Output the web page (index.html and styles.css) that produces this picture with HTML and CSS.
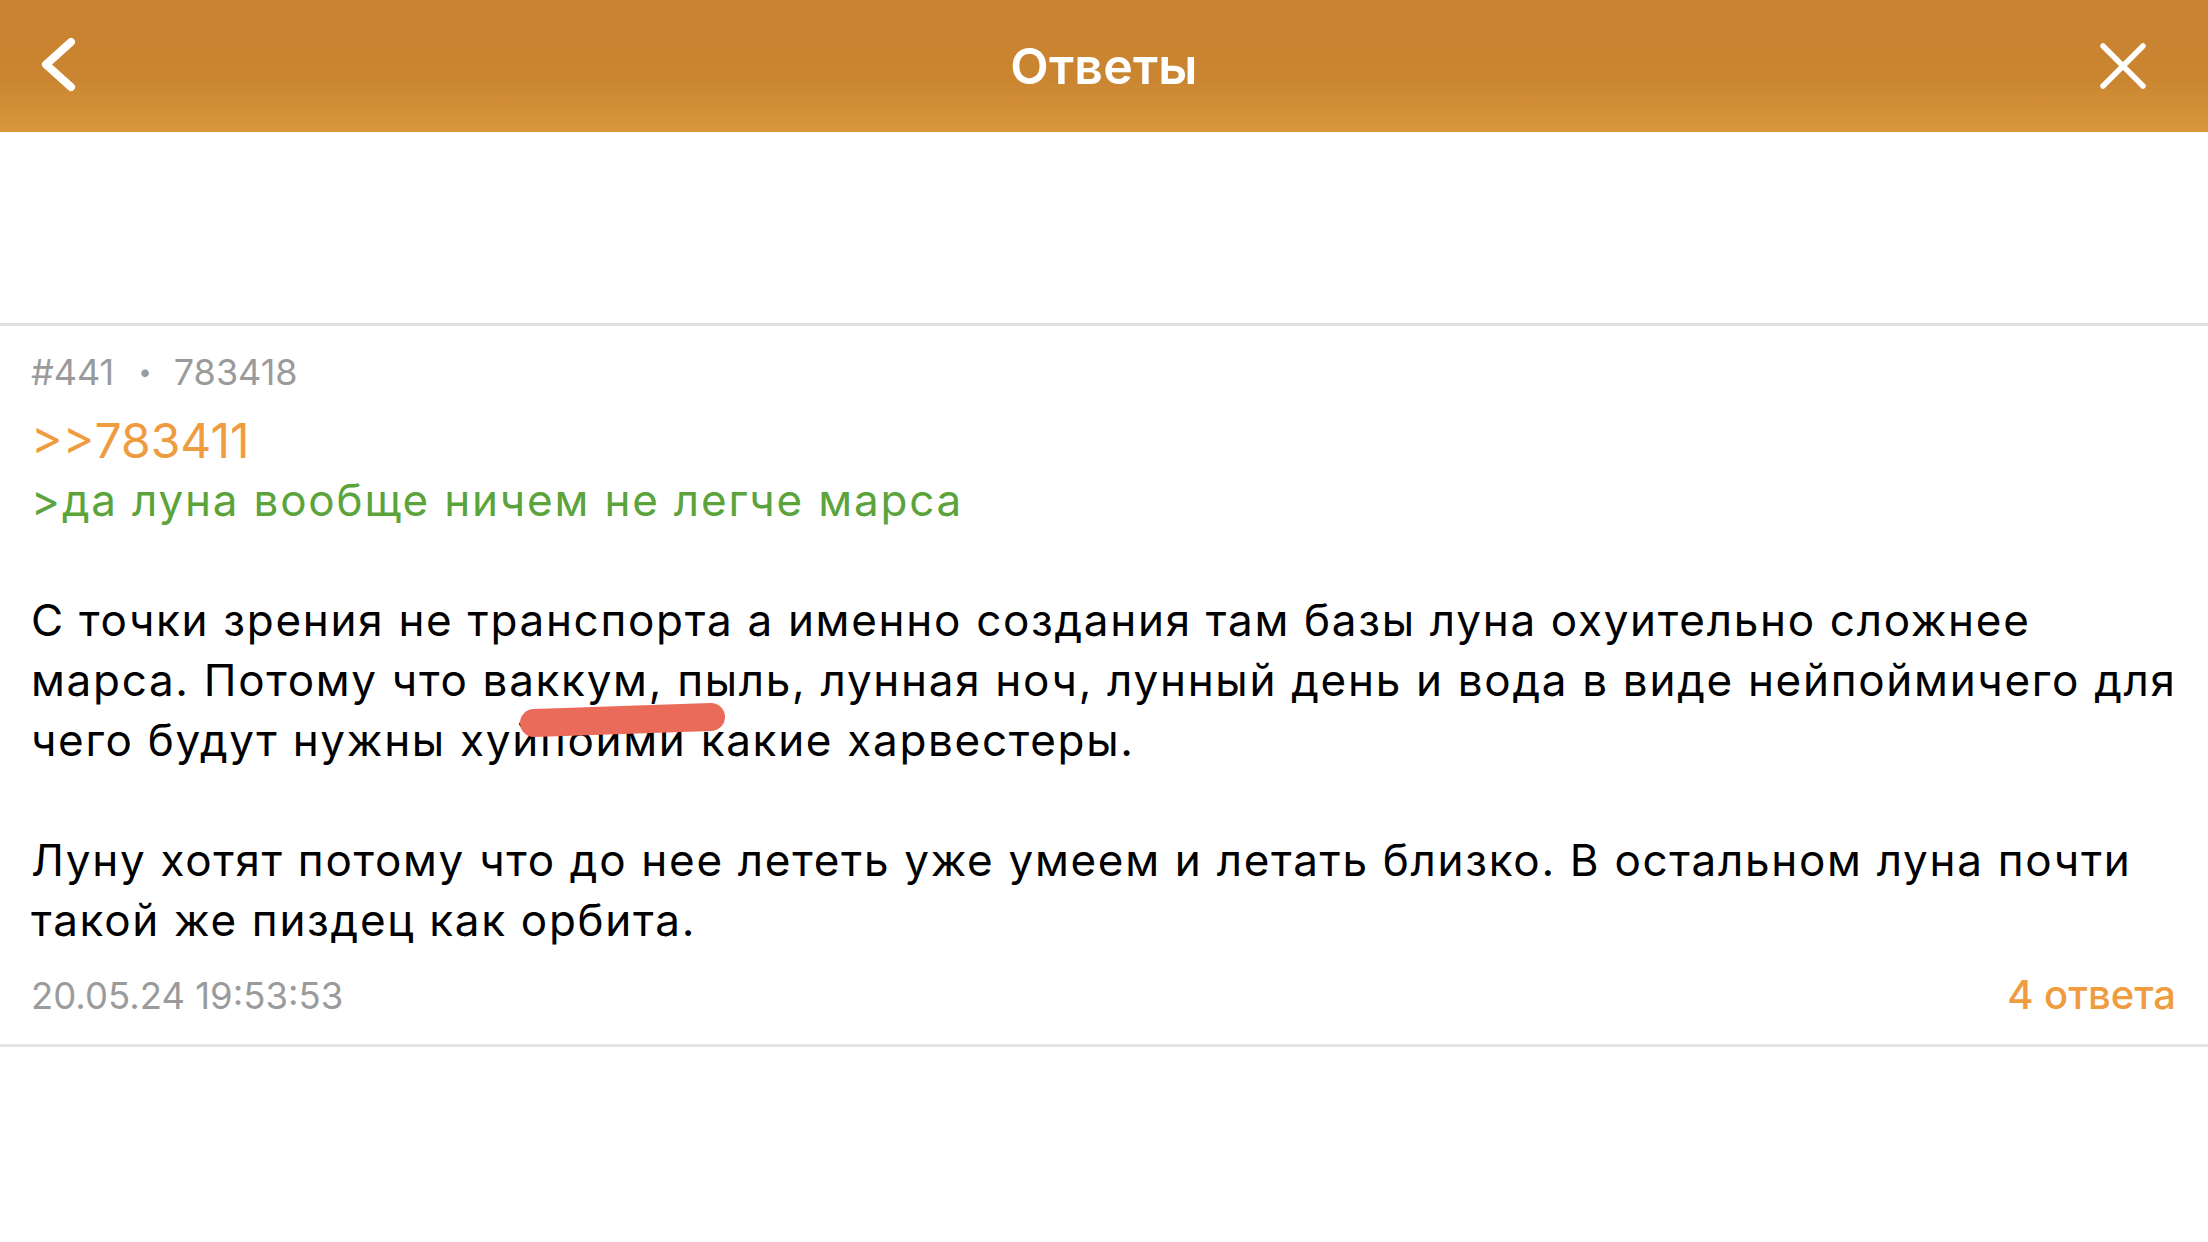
FILE: index.html
```html
<!DOCTYPE html>
<html lang="ru">
<head>
<meta charset="utf-8">
<title>Ответы</title>
<link rel="stylesheet" href="styles.css">
</head>
<body>
<div class="page">
  <header class="topbar">
    <div class="side left">
      <svg class="back" width="40" height="64" viewBox="0 0 40 64">
        <path d="M33 8 L8 30.5 L33 53" fill="none" stroke="#fff" stroke-width="8" stroke-linecap="round" stroke-linejoin="round"/>
      </svg>
    </div>
    <h1 class="title">Ответы</h1>
    <div class="side right">
      <svg class="close" width="48" height="48" viewBox="0 0 48 48">
        <path d="M4 4 L44 44 M44 4 L4 44" fill="none" stroke="#fff" stroke-width="5.5" stroke-linecap="round"/>
      </svg>
    </div>
  </header>
  <div class="spacer"></div>
  <article class="post">
    <div class="meta"><span>#441</span><span class="dot">•</span><span>783418</span></div>
    <div class="reply-link">&gt;&gt;783411</div>
    <div class="quote">&gt;да луна вообще ничем не легче марса</div>
    <p class="text">С точки зрения не транспорта а именно создания там базы луна охуительно сложнее<br>марса. Потому что ваккум, пыль, лунная ноч, лунный день и вода в виде нейпоймичего для<br>чего будут нужны хуйпоими какие харвестеры.</p>
    <p class="text">Луну хотят потому что до нее лететь уже умеем и летать близко. В остальном луна почти<br>такой же пиздец как орбита.</p>
    <div class="footer">
      <span class="date">20.05.24 19:53:53</span>
      <span class="answers">4 ответа</span>
    </div>
    <svg class="scribble" width="215" height="45" viewBox="0 0 215 45">
      <path d="M19 23 Q110 20 196 17" fill="none" stroke="#ea6b5a" stroke-width="28" stroke-linecap="round"/>
    </svg>
  </article>
</div>
</body>
</html>
```

FILE: styles.css
```css
* { box-sizing: border-box; }
html, body { margin: 0; padding: 0; background: #fff; }
body { font-family: "Inter", "Noto Sans", "Liberation Sans", sans-serif; color: #000; }
.page { width: 2208px; min-height: 1242px; }

.topbar {
  height: 132px;
  display: grid;
  grid-template-columns: 1fr auto 1fr;
  align-items: center;
  background: linear-gradient(to bottom, #c98230 0%, #ca8531 60%, #d9963b 100%);
}
.side { display: flex; align-items: center; }
.side.left { justify-content: flex-start; padding-left: 38px; }
.side.right { justify-content: flex-end; padding-right: 61px; }
.back, .close { display: block; }
.title {
  margin: 0;
  color: #fff;
  font-size: 50px;
  font-weight: 600;
  line-height: 130px;
  letter-spacing: 0.2px;
}

.spacer { height: 194px; border-bottom: 3px solid #e0e0e0; }

.post {
  position: relative;
  padding: 21px 32px 23px 31px;
  border-bottom: 3px solid #e4e4e4;
}
.meta {
  font-size: 36px;
  line-height: 50px;
  color: #9b9b9b;
  display: flex;
}
.meta .dot { font-size: 24px; padding: 0 22px 0 24px; }
.reply-link {
  margin-top: 16px;
  font-size: 48px;
  line-height: 56px;
  color: #ef9c40;
}
.quote {
  margin-top: 5px;
  font-size: 44px;
  line-height: 52px;
  letter-spacing: 1.8px;
  color: #5ba33b;
}
.text {
  margin: 64px 0 0 0;
  font-size: 44px;
  line-height: 60px;
  letter-spacing: 1.7px;
  white-space: nowrap;
}
.text + .text { margin-top: 60px; }
.footer {
  margin-top: 20px;
  display: flex;
  justify-content: space-between;
  align-items: baseline;
  line-height: 50px;
}
.date { font-size: 36.5px; color: #9b9b9b; }
.answers { font-size: 40px; font-weight: 500; color: #ef9c40; }

.scribble {
  position: absolute;
  left: 515px;
  top: 374px;
}
```
